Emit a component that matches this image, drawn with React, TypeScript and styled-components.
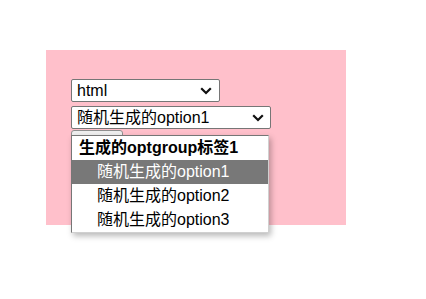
import styled, { createGlobalStyle } from "styled-components";

const GlobalStyle = createGlobalStyle`
  html, body {
    margin: 0;
    padding: 0;
    background: #ffffff;
  }
  body {
    font-family: "Liberation Sans", "Noto Sans CJK SC", sans-serif;
  }
`;

const groups = [
  {
    label: "生成的optgroup标签1",
    options: ["随机生成的option1", "随机生成的option2", "随机生成的option3"],
  },
];

export default function App() {
  return (
    <>
      <GlobalStyle />
      <Page>
        <PinkBox>
          <SelectWrap>
            <Select $width={149} defaultValue="html">
              <option value="html">html</option>
              <option value="css">css</option>
              <option value="js">js</option>
            </Select>
            <Chevron />
          </SelectWrap>
          <SelectWrap>
            <Select $width={200} defaultValue="随机生成的option1">
              {groups.map((g) => (
                <optgroup key={g.label} label={g.label}>
                  {g.options.map((o) => (
                    <option key={o} value={o}>
                      {o}
                    </option>
                  ))}
                </optgroup>
              ))}
            </Select>
            <Chevron $right={7} />
            <DropList>
              {groups.map((g) => (
                <div key={g.label}>
                  <GroupLabel>{g.label}</GroupLabel>
                  {g.options.map((o, i) => (
                    <OptionRow key={o} $selected={i === 0}>
                      {o}
                    </OptionRow>
                  ))}
                </div>
              ))}
            </DropList>
          </SelectWrap>
          <SubmitButton>提交</SubmitButton>
        </PinkBox>
      </Page>
    </>
  );
}

function Chevron({ $right = 8 }: { $right?: number }) {
  return (
    <ChevronIcon $right={$right} width="12" height="8" viewBox="0 0 12 8">
      <path d="M1.2 1.2 L6 6 L10.8 1.2" fill="none" stroke="#111" strokeWidth="2.2" />
    </ChevronIcon>
  );
}

const Page = styled.div`
  min-height: 299px;
  padding: 50px 0 0 46px;
  box-sizing: border-box;
`;

const PinkBox = styled.div`
  width: 300px;
  height: 175px;
  box-sizing: border-box;
  background: #ffc0cb;
  padding: 29px 25px 0;
  display: flex;
  flex-direction: column;
  align-items: flex-start;
`;

const SelectWrap = styled.div`
  position: relative;
  margin-bottom: 4px;
  &:nth-child(2) {
    margin-bottom: 1px;
  }
`;

const Select = styled.select<{ $width: number }>`
  appearance: none;
  display: block;
  width: ${(p) => p.$width}px;
  height: 23px;
  box-sizing: border-box;
  margin: 0;
  padding: 0 20px 0 5px;
  border: 1px solid #767676;
  border-radius: 2px;
  background: #ffffff;
  color: #000000;
  font-family: "Liberation Sans", "Noto Sans CJK SC", sans-serif;
  font-size: 16px;
  line-height: 21px;
  outline: none;
`;

const ChevronIcon = styled.svg<{ $right: number }>`
  position: absolute;
  top: 8px;
  right: ${(p) => p.$right}px;
  pointer-events: none;
`;

const SubmitButton = styled.button`
  width: 52px;
  height: 22px;
  box-sizing: border-box;
  border: 1px solid #8f8f8f;
  border-radius: 3px;
  background: #efefef;
  font-family: "Liberation Sans", "Noto Sans CJK SC", sans-serif;
  font-size: 13px;
  color: #000;
`;

const DropList = styled.div`
  position: absolute;
  top: 29px;
  left: 0;
  width: 198px;
  box-sizing: border-box;
  background: #ffffff;
  border: 1px solid #767676;
  border-right-color: #d0d0d0;
  border-bottom-color: #d0d0d0;
  box-shadow: 2px 3px 6px rgba(0, 0, 0, 0.28);
  z-index: 10;
`;

const GroupLabel = styled.div`
  height: 24px;
  line-height: 24px;
  padding-left: 7px;
  font-size: 16px;
  font-weight: bold;
  color: #000;
  white-space: nowrap;
`;

const OptionRow = styled.div<{ $selected?: boolean }>`
  height: 24px;
  line-height: 24px;
  padding-left: 25px;
  font-size: 16px;
  white-space: nowrap;
  color: ${(p) => (p.$selected ? "#ffffff" : "#000000")};
  background: ${(p) => (p.$selected ? "#787878" : "transparent")};
`;
